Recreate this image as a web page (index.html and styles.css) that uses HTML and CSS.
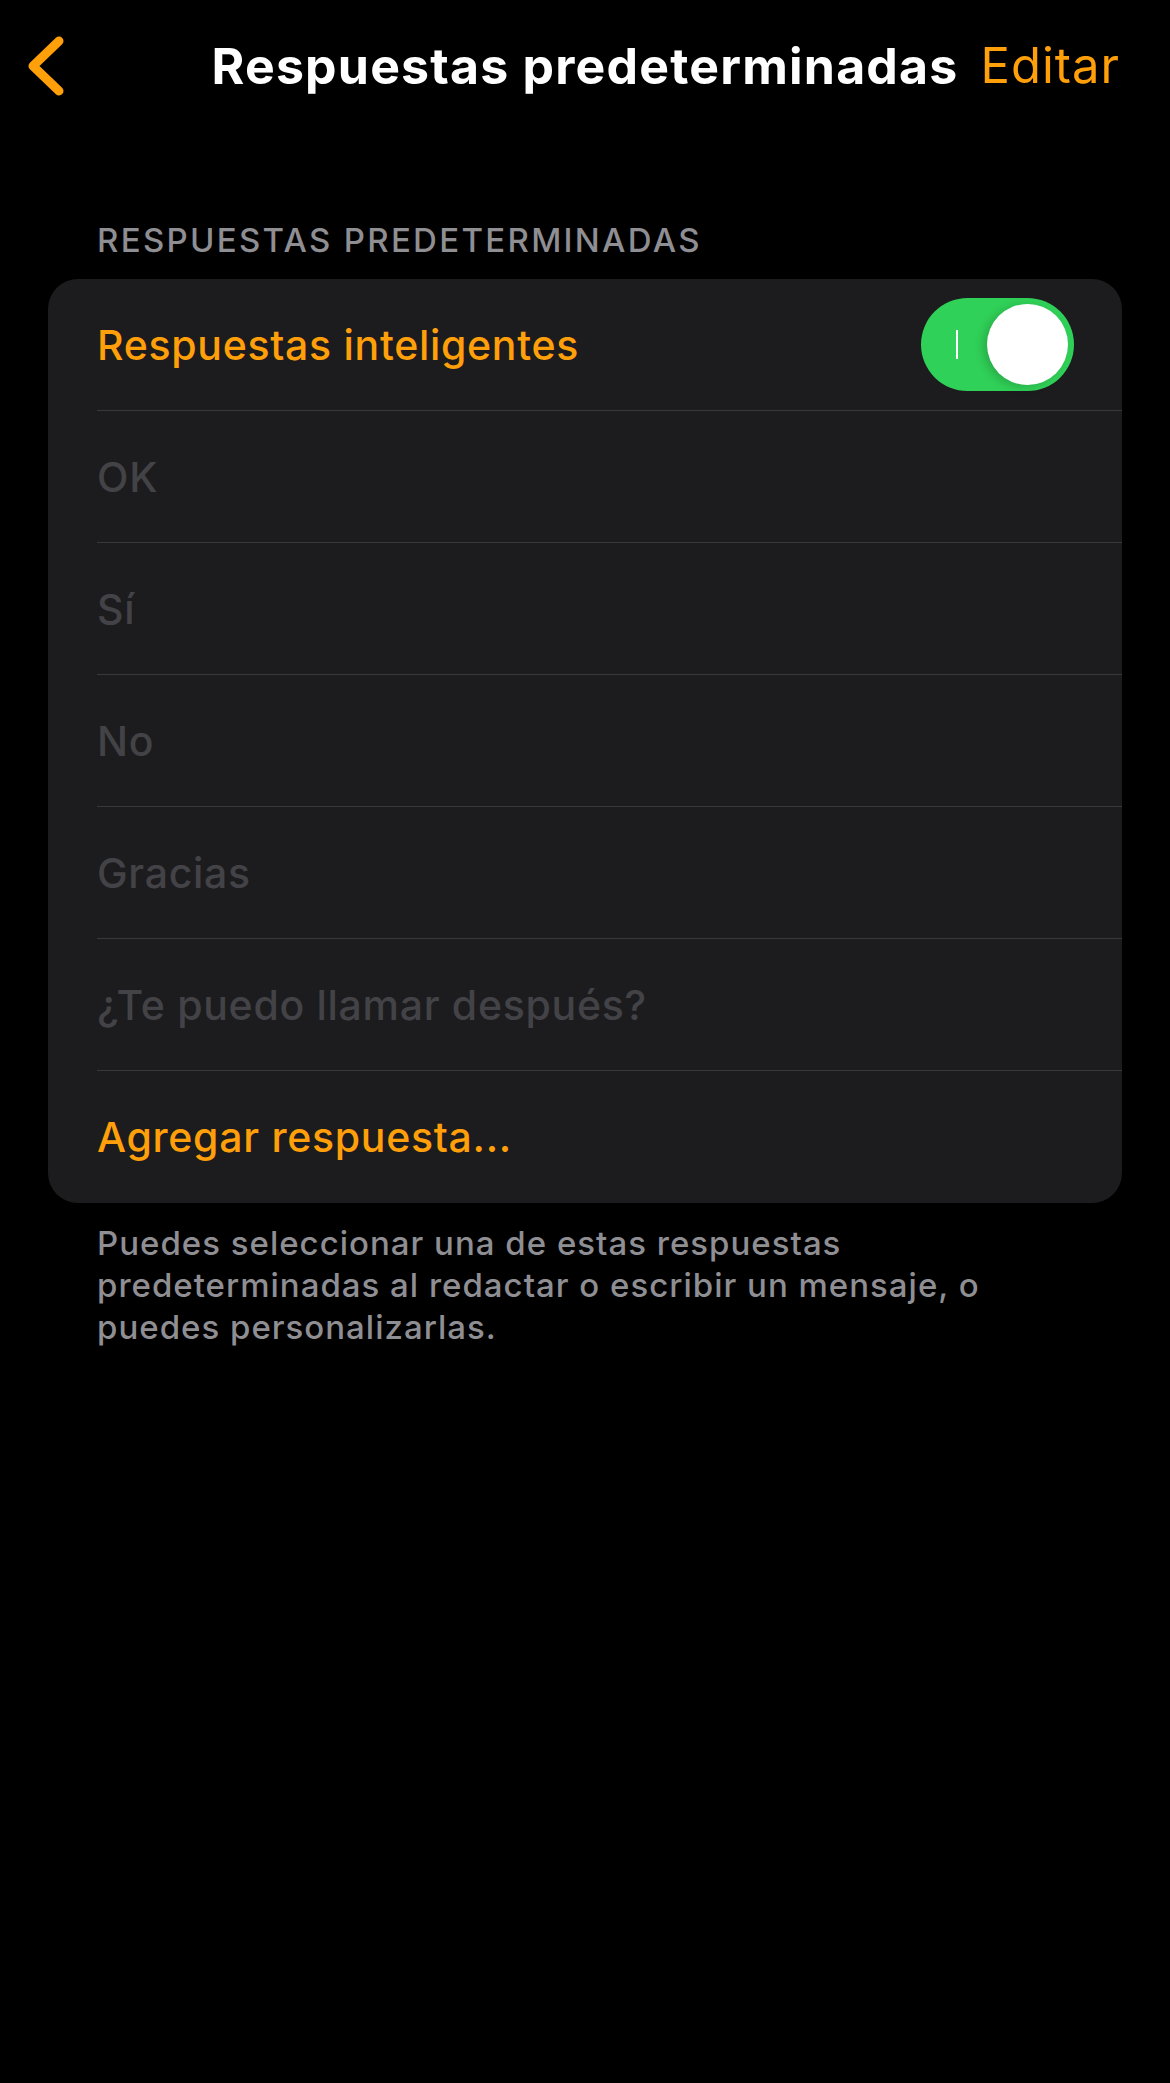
FILE: index.html
```html
<!DOCTYPE html>
<html lang="es">
<head>
  <meta charset="UTF-8" />
  <meta name="viewport" content="width=device-width, initial-scale=1.0"/>
  <title>Respuestas predeterminadas</title>
  <link rel="stylesheet" href="styles.css">
</head>
<body>

  <nav class="navbar">
    <a href="#" class="back" aria-label="Atrás">
      <svg width="40" height="64" viewBox="0 0 40 64">
        <path d="M35 7 L9 32 L35 57" fill="none" stroke="#ff9f0a" stroke-width="9" stroke-linecap="round" stroke-linejoin="round"/>
      </svg>
    </a>
    <h1 class="title">Respuestas predeterminadas</h1>
    <a href="#" class="edit">Editar</a>
  </nav>

  <main>
    <h2 class="section-header">Respuestas predeterminadas</h2>

    <div class="card">
      <div class="row">
        <span class="label accent">Respuestas inteligentes</span>
        <div class="toggle on">
          <span class="toggle-mark"></span>
          <span class="knob"></span>
        </div>
      </div>
      <div class="row"><span class="label muted">OK</span></div>
      <div class="row"><span class="label muted">Sí</span></div>
      <div class="row"><span class="label muted">No</span></div>
      <div class="row"><span class="label muted">Gracias</span></div>
      <div class="row"><span class="label muted">¿Te puedo llamar después?</span></div>
      <div class="row"><span class="label accent">Agregar respuesta...</span></div>
    </div>

    <p class="footer-note">Puedes seleccionar una de estas respuestas predeterminadas al redactar o escribir un mensaje, o puedes personalizarlas.</p>
  </main>

</body>
</html>
```

FILE: styles.css
```css
body {
  margin: 0;
  padding: 0;
  background: #000;
  color: #fff;
  font-family: Inter, "Noto Sans", sans-serif;
}

a {
  text-decoration: none;
}

/* barra superior */
.navbar {
  display: grid;
  grid-template-columns: 1fr auto 1fr;
  align-items: center;
  height: 131px;
  padding: 0 50px;
}

.back {
  display: flex;
  align-items: center;
  justify-self: start;
  margin-left: -26px;
}

.back svg {
  display: block;
}

.title {
  margin: 0;
  font-size: 50px;
  line-height: 48px;
  font-weight: 700;
  letter-spacing: 1.2px;
  color: #fff;
}

.edit {
  justify-self: end;
  font-size: 49px;
  line-height: 48px;
  letter-spacing: 1px;
  color: #ff9f0a;
}

/* contenido */
main {
  padding-top: 89px;
}

.section-header {
  margin: 0 0 19px;
  padding-left: 97px;
  font-size: 33px;
  line-height: 40px;
  font-weight: 500;
  letter-spacing: 2.3px;
  text-transform: uppercase;
  color: #8e8e93;
}

.card {
  margin: 0 48px;
  background: #1c1c1e;
  border-radius: 30px;
  overflow: hidden;
}

.row {
  display: flex;
  align-items: center;
  justify-content: space-between;
  box-sizing: border-box;
  height: 132px;
  margin-left: 49px;
  padding-right: 48px;
  border-top: 1px solid #38383a;
}

.row:first-child {
  height: 131px;
  border-top: none;
}

.row:last-child {
  height: 133px;
}

.label {
  font-size: 41px;
  line-height: 48px;
  font-weight: 500;
  letter-spacing: 0.7px;
}

.accent {
  color: #ff9f0a;
}

.muted {
  color: #434347;
}

/* interruptor */
.toggle {
  position: relative;
  width: 153px;
  height: 93px;
  border-radius: 47px;
  background: #3a3a3c;
}

.toggle.on {
  background: #30d158;
}

.toggle-mark {
  position: absolute;
  left: 35px;
  top: 32px;
  width: 2px;
  height: 29px;
  background: #fff;
}

.knob {
  position: absolute;
  right: 6px;
  top: 6px;
  width: 81px;
  height: 81px;
  border-radius: 50%;
  background: #fff;
  box-shadow: -4px 2px 10px rgba(0, 0, 0, 0.18);
}

.footer-note {
  margin: 19px 0 0;
  padding: 0 97px;
  font-size: 33px;
  line-height: 42px;
  font-weight: 500;
  letter-spacing: 1px;
  color: #8e8e93;
}
```
